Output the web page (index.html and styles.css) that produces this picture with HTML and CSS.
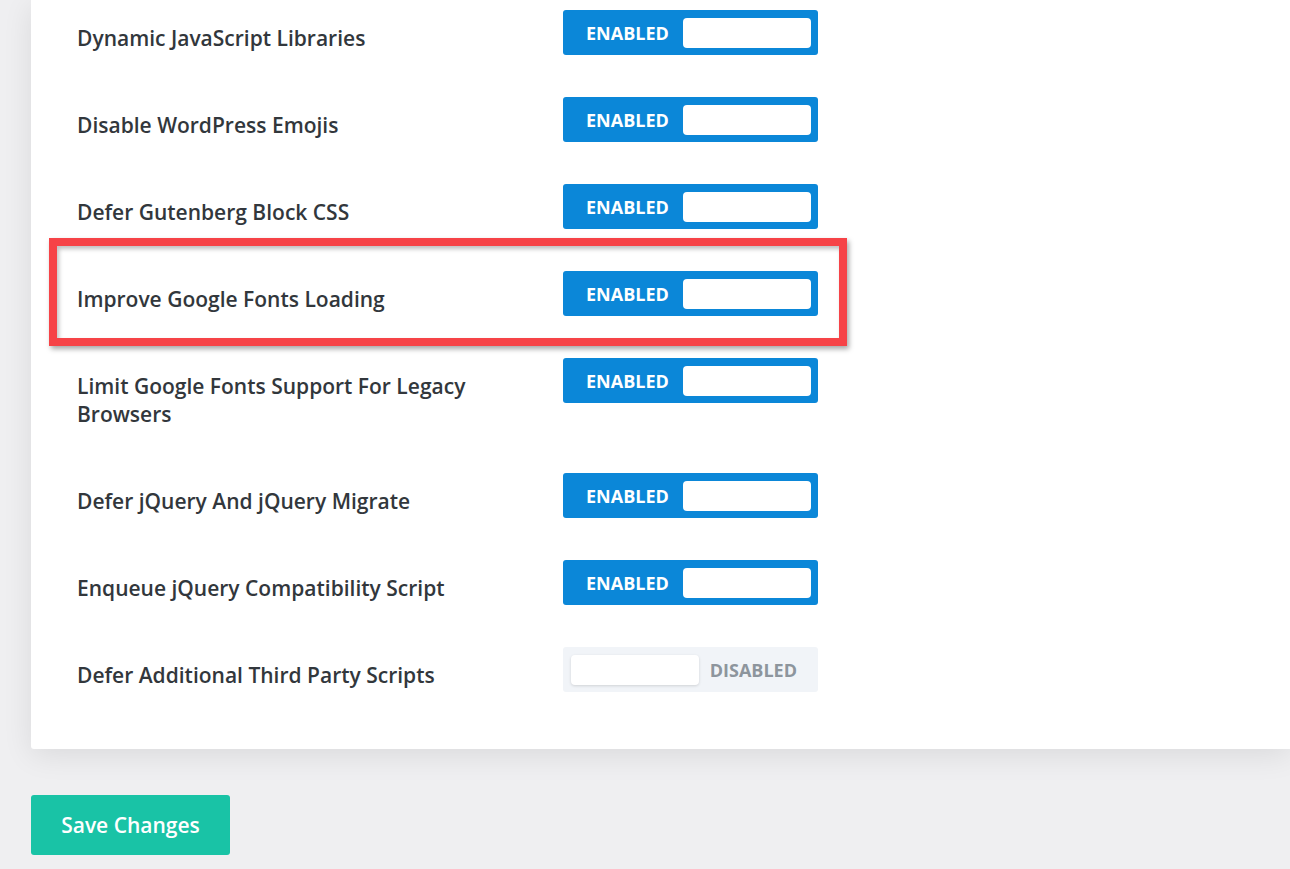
FILE: index.html
```html
<!DOCTYPE html>
<html lang="en">
<head>
<meta charset="utf-8">
<title>Performance Settings</title>
<link rel="stylesheet" href="styles.css">
</head>
<body>
<div class="page">
  <div class="card">
    <div class="row">
      <div class="label">Dynamic JavaScript Libraries</div>
      <div class="toggle on"><span class="state">ENABLED</span><span class="knob"></span></div>
    </div>
    <div class="row">
      <div class="label">Disable WordPress Emojis</div>
      <div class="toggle on"><span class="state">ENABLED</span><span class="knob"></span></div>
    </div>
    <div class="row">
      <div class="label">Defer Gutenberg Block CSS</div>
      <div class="toggle on"><span class="state">ENABLED</span><span class="knob"></span></div>
    </div>
    <div class="row highlighted">
      <div class="highlight"></div>
      <div class="label">Improve Google Fonts Loading</div>
      <div class="toggle on"><span class="state">ENABLED</span><span class="knob"></span></div>
    </div>
    <div class="row">
      <div class="label">Limit Google Fonts Support For Legacy Browsers</div>
      <div class="toggle on"><span class="state">ENABLED</span><span class="knob"></span></div>
    </div>
    <div class="row">
      <div class="label">Defer jQuery And jQuery Migrate</div>
      <div class="toggle on"><span class="state">ENABLED</span><span class="knob"></span></div>
    </div>
    <div class="row">
      <div class="label">Enqueue jQuery Compatibility Script</div>
      <div class="toggle on"><span class="state">ENABLED</span><span class="knob"></span></div>
    </div>
    <div class="row">
      <div class="label">Defer Additional Third Party Scripts</div>
      <div class="toggle off"><span class="knob"></span><span class="state">DISABLED</span></div>
    </div>
  </div>
  <div class="actions">
    <button class="save" type="button">Save Changes</button>
  </div>
</div>
</body>
</html>
```

FILE: styles.css
```css
html, body {
  margin: 0;
  padding: 0;
}
body {
  background: #efeff1;
  font-family: "Open Sans", "Noto Sans", sans-serif;
  color: #32373c;
  overflow: hidden;
}
.page {
  padding-left: 31px;
}
.card {
  background: #ffffff;
  border-radius: 0 0 0 3px;
  box-shadow: 0 6px 30px rgba(0, 0, 0, 0.09);
  padding: 10px 0 57px 46px;
  display: flex;
  flex-direction: column;
  gap: 42px;
}
.row {
  display: flex;
  align-items: flex-start;
  position: relative;
}
.label {
  width: 420px;
  margin-right: 66px;
  flex: none;
  padding: 14px 0 3px;
  font-size: 21px;
  font-weight: 600;
  line-height: 28px;
  color: #32373c;
}
.toggle {
  width: 255px;
  height: 45px;
  box-sizing: border-box;
  border-radius: 3px;
  display: flex;
  align-items: center;
  flex: none;
}
.toggle .state {
  font-size: 18px;
  font-weight: 700;
  line-height: 1;
}
.toggle .knob {
  width: 128px;
  height: 30px;
  border-radius: 4px;
  background: #ffffff;
}
.toggle.on {
  background: #0b87d8;
  padding: 0 7px 0 23px;
  justify-content: space-between;
}
.toggle.on .state {
  color: #ffffff;
}
.toggle.off {
  background: #f1f4f8;
  padding: 0 21px 0 8px;
  justify-content: space-between;
}
.toggle.off .state {
  color: #8d959d;
}
.toggle.off .knob {
  box-shadow: 0 1px 3px rgba(0, 0, 0, 0.14);
}
.highlight {
  position: absolute;
  left: -28px;
  top: -33px;
  width: 798px;
  height: 108px;
  box-sizing: border-box;
  border: 8px solid #f64347;
  box-shadow: 2px 3px 5px rgba(0, 0, 0, 0.35), inset 2px 3px 4px rgba(0, 0, 0, 0.25);
  pointer-events: none;
}
.actions {
  padding-top: 46px;
}
.save {
  width: 199px;
  height: 60px;
  border: none;
  border-radius: 3px;
  background: #19c3a6;
  color: #ffffff;
  font-family: "Open Sans", "Noto Sans", sans-serif;
  font-size: 21px;
  font-weight: 600;
  padding: 0;
  cursor: pointer;
}
```
